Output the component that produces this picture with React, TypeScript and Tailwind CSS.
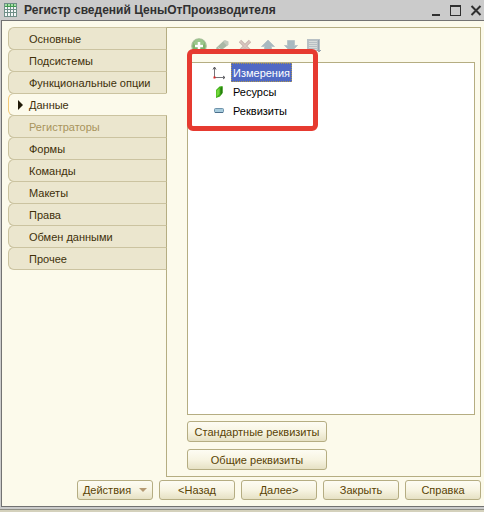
import clsx from 'clsx';

const tabs = [
  { title: 'Основные' },
  { title: 'Подсистемы' },
  { title: 'Функциональные опции' },
  { title: 'Данные', active: true },
  { title: 'Регистраторы', disabled: true },
  { title: 'Формы' },
  { title: 'Команды' },
  { title: 'Макеты' },
  { title: 'Права' },
  { title: 'Обмен данными' },
  { title: 'Прочее' },
];

function RegisterIcon() {
  return (
    <svg width="14" height="14" viewBox="0 0 14 14" shapeRendering="crispEdges">
      <path fill="#6f8f88" d="M0 0h13v14H0z" />
      <path fill="#3f9a50" d="M1 1h11v3H1z" />
      <path fill="#a8dca8" d="M1 1h2v2H1zM4 1h2v2H4zM7 1h2v2H7zM10 1h2v2h-2z" />
      <path
        fill="#f4f7f8"
        d="M1 4h2v2H1zM4 4h2v2H4zM7 4h2v2H7zM10 4h2v2h-2zM1 7h2v2H1zM4 7h2v2H4zM7 7h2v2H7zM10 7h2v2h-2zM1 10h2v3H1zM4 10h2v3H4zM7 10h2v3H7zM10 10h2v3h-2z"
      />
    </svg>
  );
}

function AddIcon() {
  return (
    <svg width="16" height="16" viewBox="0 0 16 16">
      <circle cx="8" cy="8" r="7.200" fill="#7fb36d" stroke="#a9bf9d" strokeWidth="1.200" />
      <path d="M2.500 6.500a5.500 5.500 0 0 1 11 0z" fill="#9cc78c" />
      <path d="M8 4v8M4 8h8" stroke="#fff" strokeWidth="2.500" />
    </svg>
  );
}

function EditIcon() {
  return (
    <svg width="16" height="16" viewBox="0 0 16 16">
      <path d="M1.500 14l1-4.500L10 2.500l4 1.500v3L6.500 13z" fill="#a9b8a6" />
      <path d="M9 3.500l2-1.500 3.500 1.500v3L13 8z" fill="#c3cabd" />
      <path d="M4 9.500l3 2" stroke="#d0d6c8" />
    </svg>
  );
}

function DeleteIcon() {
  return (
    <svg width="16" height="16" viewBox="0 0 16 16">
      <path d="M3 3l10 10M13 3L3 13" stroke="#c6b3ab" strokeWidth="3.200" />
      <path d="M3 3l10 10M13 3L3 13" stroke="#d9c6c0" strokeWidth="1.500" />
    </svg>
  );
}

function ArrowIcon({ down }: { down?: boolean }) {
  return (
    <svg width="16" height="16" viewBox="0 0 16 16">
      <path
        d={
          down
            ? 'M4.500 2.500h7v5h3L8 14 1.500 7.500h3z'
            : 'M8 2l6.500 6.500h-3v5h-7v-5h-3z'
        }
        fill="#a8b9c0"
        stroke="#bac6c8"
      />
    </svg>
  );
}

function ListIcon() {
  return (
    <svg width="16" height="16" viewBox="0 0 16 16" shapeRendering="crispEdges">
      <path d="M1 1h13v12H1z" fill="#b8c0c4" />
      <path d="M3 3h8v1H3zM3 5h8v1H3zM3 7h8v1H3zM3 9h8v1H3zM3 11h8v1H3z" fill="#d8dcda" />
      <path d="M12 2h1v10h-1z" fill="#98a6b0" />
      <path d="M10 12h5l-2 3z" fill="#98a6b0" />
    </svg>
  );
}

function AxesIcon() {
  return (
    <svg width="14" height="14" viewBox="0 0 14 14">
      <path d="M2.500 1v10.500H13" fill="none" stroke="#75757a" />
      <path d="M1 3.500L2.500 1 4 3.500M11 10l2 1.500-2 1.500" fill="none" stroke="#55555a" />
      <path d="M1.500 10.500h2v2h-2z" fill="#e02020" />
    </svg>
  );
}

function ResourceIcon() {
  return (
    <svg width="14" height="14" viewBox="0 0 14 14">
      <path d="M4 5l3.500-3.500 3-.5v7l-2.500 3.500-4 1.500z" fill="#3fae19" />
      <path d="M4.500 5.500L7.500 3v6l-3 3z" fill="#72d63a" />
      <path d="M8.500 3l2-1.500v6.500l-2 2.500z" fill="#267f0d" />
    </svg>
  );
}

function AttributeIcon() {
  return (
    <svg width="14" height="14" viewBox="0 0 14 14">
      <rect x="2.500" y="4.500" width="9" height="4" rx="1" fill="#a7cbdc" stroke="#6f93ab" />
      <path d="M3 8.500h8" stroke="#4b6f8c" />
    </svg>
  );
}

const nodes = [
  { title: 'Измерения', icon: <AxesIcon />, selected: true },
  { title: 'Ресурсы', icon: <ResourceIcon /> },
  { title: 'Реквизиты', icon: <AttributeIcon /> },
];

const tools = [
  { title: 'Добавить', icon: <AddIcon /> },
  { title: 'Изменить', icon: <EditIcon /> },
  { title: 'Удалить', icon: <DeleteIcon /> },
  { title: 'Вверх', icon: <ArrowIcon /> },
  { title: 'Вниз', icon: <ArrowIcon down /> },
  { title: 'Упорядочить', icon: <ListIcon /> },
];

function Button({ children, className }: { children: React.ReactNode; className?: string }) {
  return (
    <button
      className={clsx(
        'flex items-center justify-center rounded-[3px] border border-[#b5ad82] bg-linear-to-b from-[#fdfcf3] via-[#f7f4e2] to-[#e6e1c4] whitespace-nowrap text-[#594304]',
        className,
      )}
    >
      {children}
    </button>
  );
}

function TitleBar() {
  return (
    <header className="flex h-5 items-center bg-[#cbcbcb] pl-1 text-[#303030]">
      <RegisterIcon />
      <h1 className="ml-1.5 flex-1 text-[12px] font-bold whitespace-nowrap">
        Регистр сведений ЦеныОтПроизводителя
      </h1>
      <div className="flex gap-2 pr-0.5">
        <button aria-label="Свернуть">
          <svg width="12" height="12" viewBox="0 0 12 12">
            <path d="M2 10h8v2H2z" fill="#303030" />
          </svg>
        </button>
        <button aria-label="Развернуть">
          <svg width="12" height="12" viewBox="0 0 12 12" shapeRendering="crispEdges">
            <path d="M0 1h11v11H0zM1 3v8h9V3z" fillRule="evenodd" fill="#303030" />
          </svg>
        </button>
        <button aria-label="Закрыть окно">
          <svg width="12" height="12" viewBox="0 0 12 12">
            <path d="M1.500 2l9 9M10.500 2l-9 9" stroke="#303030" strokeWidth="2" />
          </svg>
        </button>
      </div>
    </header>
  );
}

function Sidebar() {
  return (
    <nav className="z-10 -mr-px w-[159px] shrink-0">
      {tabs.map((tab) => (
        <button
          key={tab.title}
          disabled={tab.disabled}
          className={clsx(
            '-mb-px flex h-[23px] w-full items-center rounded-l-[6px] border text-left whitespace-nowrap',
            tab.active
              ? 'border-y-[#cbc3a0] border-r-[#fcfaeb] border-l-[#f3c978] bg-[#fcfaeb]'
              : 'border-[#cbc3a0] border-r-[#b5ad82] bg-[#ebe6ce]',
            tab.disabled ? 'text-[#a8945c]' : 'text-[#40300a]',
          )}
        >
          <span className="flex w-5 justify-center pl-0.5">
            {tab.active && (
              <svg width="5" height="10" viewBox="0 0 5 10">
                <path d="M0 0l5 5-5 5z" fill="#201a08" />
              </svg>
            )}
          </span>
          {tab.title}
        </button>
      ))}
    </nav>
  );
}

function DataPanel() {
  return (
    <section className="flex flex-1 flex-col border border-[#b5ad82] pt-2.5 pr-[5px] pb-1.5 pl-5">
      <div className="relative flex flex-1 flex-col">
        <div className="flex h-6 gap-[7px] pl-1">
          {tools.map((tool) => (
            <button key={tool.title} aria-label={tool.title} className="size-4">
              {tool.icon}
            </button>
          ))}
        </div>
        <ul className="flex-1 border border-[#b5ad82] bg-white text-black">
          {nodes.map((node) => (
            <li key={node.title} className="flex h-[19px] items-center pl-6">
              {node.icon}
              <span
                className={clsx(
                  'ml-[5px] h-[19px] px-0.5 leading-5',
                  node.selected && 'bg-[#5069c4] text-white outline-1 -outline-offset-1 outline-dotted outline-[#b0984a]',
                )}
              >
                {node.title}
              </span>
            </li>
          ))}
        </ul>
        <div className="pointer-events-none absolute top-[11px] left-0 h-[82px] w-[131px] rounded-[6px] border-[5px] border-[#e63a30]" />
      </div>
      <Button className="mt-1.5 h-[21px] w-[140px]">Стандартные реквизиты</Button>
      <Button className="mt-[7px] h-[21px] w-[140px]">Общие реквизиты</Button>
    </section>
  );
}

export default function App() {
  return (
    <div className="flex min-h-screen flex-col bg-[#cbcbcb] font-['Liberation_Sans',sans-serif] text-[11px] leading-4">
      <TitleBar />
      <main className="ml-px flex flex-1 flex-col border-y border-l border-[#727272] bg-[#fcfaeb] pt-1.5 pr-[3px] pb-1.5 pl-1.5">
        <div className="flex flex-1">
          <Sidebar />
          <DataPanel />
        </div>
        <footer className="mt-[3px] flex justify-end gap-1.5">
          <Button className="h-5 w-[76px] gap-2">
            Действия
            <svg width="8" height="4" viewBox="0 0 8 4">
              <path d="M0 0h8L4 4z" fill="#b59a73" />
            </svg>
          </Button>
          <Button className="h-5 w-[76px]">&lt;Назад</Button>
          <Button className="h-5 w-[76px]">Далее&gt;</Button>
          <Button className="h-5 w-[76px]">Закрыть</Button>
          <Button className="h-5 w-[76px]">Справка</Button>
        </footer>
      </main>
      <div className="mt-0.5 h-[3px] border-t border-[#8f8f86] bg-[#d4d1bc]" />
    </div>
  );
}
